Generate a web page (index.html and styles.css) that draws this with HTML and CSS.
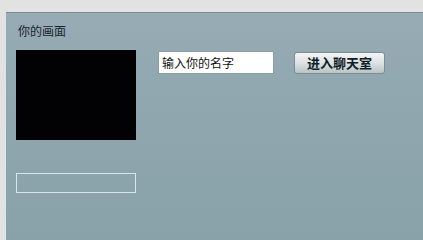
FILE: index.html
```html
<!DOCTYPE html>
<html>
<head>
<meta charset="utf-8">
<link rel="stylesheet" href="styles.css">
</head>
<body>
<div class="frame">
  <div class="panel">
    <div class="title">你的画面</div>
    <div class="row">
      <div class="left">
        <div class="video"></div>
        <div class="outline"></div>
      </div>
      <div class="form">
        <input class="name" type="text" value="输入你的名字">
        <button class="enter">进入聊天室</button>
      </div>
    </div>
  </div>
</div>
</body>
</html>
```
FILE: styles.css
```css
html, body {
  margin: 0;
  padding: 0;
  background: #e2e2e2;
  overflow: hidden;
}
.frame {
  padding: 12px 0 0 6px;
}
.panel {
  min-height: 199px;
  height: calc(100vh - 12px);
  border-top: 1px solid #7c8b91;
  background: linear-gradient(180deg, #96abb4 0px, #8aa2aa 199px, #89a1a9 100%);
  padding: 0 0 0 10px;
  font-family: "Noto Sans CJK SC", "Noto Sans", sans-serif;
  box-sizing: border-box;
}
.title {
  padding: 10px 0 0 2px;
  height: 27px;
  font-size: 12px;
  line-height: 16px;
  color: #17252b;
  box-sizing: border-box;
}
.row {
  display: flex;
  margin-top: 10px;
}
.left {
  display: flex;
  flex-direction: column;
}
.video {
  width: 120px;
  height: 90px;
  background: #020204;
}
.outline {
  margin-top: 33px;
  width: 120px;
  height: 20px;
  box-sizing: border-box;
  border: 1px solid #d6e6ee;
}
.form {
  display: flex;
  align-items: flex-start;
  margin-left: 22px;
  margin-top: 1px;
}
.name {
  width: 116px;
  height: 23px;
  box-sizing: border-box;
  margin: 0;
  border: 1px solid #8a9ea4;
  background: #ffffff;
  padding: 0 0 0 3px;
  font-family: "Noto Sans CJK SC", "Noto Sans", sans-serif;
  font-size: 12px;
  color: #111;
  outline: none;
}
.enter {
  margin: 1px 0 0 20px;
  width: 91px;
  height: 22px;
  box-sizing: border-box;
  border: 1px solid #7d8d92;
  border-radius: 3px;
  background: linear-gradient(180deg, #f2f4f4 0%, #dde2e3 50%, #b9c3c5 100%);
  font-family: "Noto Sans CJK SC", "Noto Sans", sans-serif;
  font-size: 13px;
  font-weight: bold;
  color: #0e2026;
  padding: 0;
  line-height: 18px;
}
```
